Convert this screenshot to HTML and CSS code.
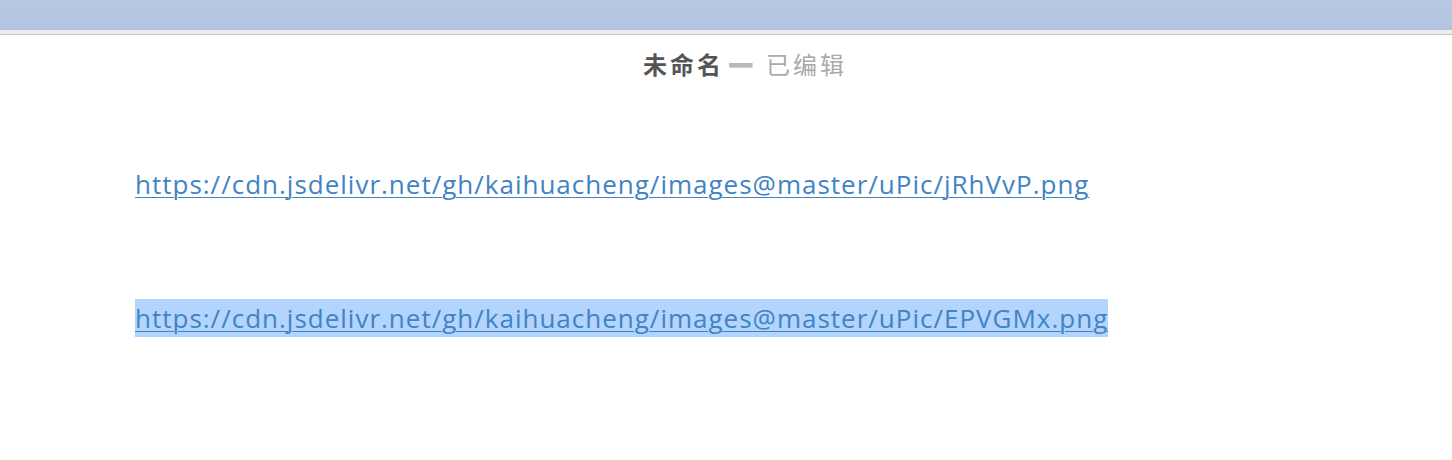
FILE: index.html
```html
<!DOCTYPE html>
<html lang="zh">
<head>
<meta charset="utf-8">
<title>未命名 — 已编辑</title>
<link rel="stylesheet" href="styles.css">
</head>
<body>
<header class="chrome">
  <div class="chrome-bar"></div>
  <div class="chrome-strip"></div>
</header>
<div class="title-row">
  <span class="title-name">未命名</span>
  <span class="title-dash">—</span>
  <span class="title-state">已编辑</span>
</div>
<main class="doc">
  <p class="para"><a class="link" href="#">https://cdn.jsdelivr.net/gh/kaihuacheng/images@master/uPic/jRhVvP.png</a></p>
  <p class="para"><a class="link selected" href="#">https://cdn.jsdelivr.net/gh/kaihuacheng/images@master/uPic/EPVGMx.png</a></p>
</main>
</body>
</html>
```

FILE: styles.css
```css
html, body {
  margin: 0;
  padding: 0;
  background: #ffffff;
}
body {
  width: 1452px;
  height: 460px;
  overflow: hidden;
  font-family: "Open Sans", "Noto Sans CJK SC", sans-serif;
}
.chrome-bar {
  height: 30px;
  background: linear-gradient(to bottom, #b9c9e4, #b1c3e0);
}
.chrome-strip {
  height: 4px;
  background: #ececec;
  border-bottom: 1px solid #c6c6c6;
}
.title-row {
  display: flex;
  justify-content: center;
  align-items: center;
  padding: 7px 0 0 38px;
  height: 44px;
  font-family: "Noto Sans CJK SC", sans-serif;
  font-size: 24px;
  line-height: 32px;
}
.title-name {
  font-weight: 700;
  color: #555555;
  letter-spacing: 3px;
}
.title-dash {
  font-weight: 700;
  color: #b8b8b8;
  margin: 0 14px 0 6px;
  transform: translateY(-5px) scale(1.2, 2.0);
}
.title-state {
  color: #aaaaaa;
  letter-spacing: 3px;
}
.doc {
  padding: 79px 0 0 135px;
}
.para {
  margin: 0 0 96px;
  font-size: 26px;
  line-height: 38px;
  letter-spacing: 1px;
}
.link {
  color: #4183c4;
  text-decoration: underline;
  text-underline-offset: 3px;
  text-decoration-thickness: 1px;
}
.selected {
  background: #b3d4fc;
  padding: 1px 0;
}
```
